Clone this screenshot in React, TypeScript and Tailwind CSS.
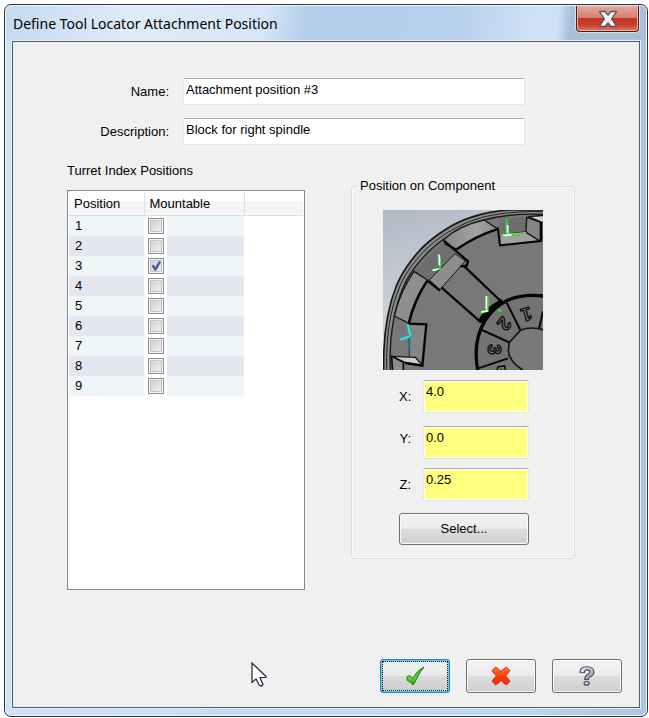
import { useState } from "react";
import type { ReactNode } from "react";

const positions = [1, 2, 3, 4, 5, 6, 7, 8, 9];

const axes = [
  { id: "x", label: "X:", value: "4.0", gap: "mb-[13px]", labelGap: "" },
  { id: "y", label: "Y:", value: "0.0", gap: "mb-[9px]", labelGap: "pb-2" },
  { id: "z", label: "Z:", value: "0.25", gap: "mb-3", labelGap: "" },
];

const fields = [
  { id: "name", label: "Name:", value: "Attachment position #3" },
  { id: "description", label: "Description:", value: "Block for right spindle" },
];

const buttonFace =
  "flex items-center justify-center rounded-[3px] border border-[#707070] bg-[linear-gradient(#f2f2f2_0%,#ebebeb_49%,#dddddd_50%,#cfcfcf_100%)] shadow-[inset_0_0_0_1px_#fbfbfb]";

function CloseIcon() {
  return (
    <svg width="20" height="18" viewBox="0 0 20 18" aria-hidden="true">
      <path
        d="M1.5 1.5H7L10 5.2L13 1.5H18.5L13.6 9L18.5 16.5H13L10 12.8L7 16.5H1.5L6.4 9Z"
        fill="#f3f3f3"
        stroke="#535666"
        strokeWidth="1.3"
        strokeLinejoin="round"
      />
    </svg>
  );
}

function AcceptIcon() {
  return (
    <svg width="19" height="20" viewBox="0 0 19 20" aria-hidden="true">
      <defs>
        <linearGradient id="accept" x1="0" y1="0" x2="0" y2="1">
          <stop offset="0" stopColor="#2fae1c" />
          <stop offset="0.6" stopColor="#6ad83c" />
          <stop offset="1" stopColor="#1f9410" />
        </linearGradient>
      </defs>
      <path
        d="M1 11L3.500 9.500L7 12.500C9.500 7.500 13 3.500 18 1C14 6 11 11.500 8.500 17L7 19C5.500 17 3 15 1.200 14.500Z"
        fill="url(#accept)"
        stroke="#187a12"
        strokeWidth="1"
        strokeLinejoin="round"
      />
    </svg>
  );
}

function CancelIcon() {
  return (
    <svg width="20" height="20" viewBox="0 0 20 20" aria-hidden="true">
      <defs>
        <linearGradient id="cancel" x1="0" y1="0" x2="0" y2="1">
          <stop offset="0" stopColor="#ff7a3d" />
          <stop offset="0.5" stopColor="#ff3b0c" />
          <stop offset="1" stopColor="#f02c05" />
        </linearGradient>
      </defs>
      <path
        d="M4.500 1.200Q7.500 2.500 10 5.500Q12.500 2.500 15.500 1.200L18.800 4.500Q17.500 7.500 14.500 10Q17.500 12.500 18.800 15.500L15.500 18.800Q12.500 17.500 10 14.500Q7.500 17.500 4.500 18.800L1.200 15.500Q2.500 12.500 5.500 10Q2.500 7.500 1.200 4.500Z"
        fill="url(#cancel)"
        stroke="#c6280a"
        strokeWidth="1"
        strokeLinejoin="round"
      />
    </svg>
  );
}

function HelpIcon() {
  return (
    <svg width="16" height="20" viewBox="0 0 16 20" aria-hidden="true">
      <defs>
        <linearGradient id="help" x1="0" y1="0" x2="1" y2="1">
          <stop offset="0" stopColor="#f2f2fb" />
          <stop offset="1" stopColor="#8b8da8" />
        </linearGradient>
      </defs>
      <path
        d="M1 6.500C1 2.500 4 0.700 8 0.700C12 0.700 15 2.700 15 6C15 9 13 10 11 11C9.800 11.700 9.500 12.500 9.500 13.500H5.700C5.700 11 6.500 9.700 8.500 8.500C10 7.600 10.700 7 10.700 5.900C10.700 4.700 9.700 3.900 8.100 3.900C6.300 3.900 5.500 4.900 5.300 6.800Z"
        fill="url(#help)"
        stroke="#44465a"
        strokeWidth="1.100"
        strokeLinejoin="round"
      />
      <ellipse cx="7.600" cy="17.200" rx="2.600" ry="2" fill="#c3c4d6" stroke="#44465a" strokeWidth="1.100" />
    </svg>
  );
}

function Pointer() {
  return (
    <svg
      className="pointer-events-none absolute top-[3px] left-[238px]"
      width="17"
      height="26"
      viewBox="0 0 17 26"
      aria-hidden="true"
    >
      <path
        d="M1 1V20.500L5 17L8.500 23.500L10.500 24L12 22.500L9 15.500H14.800L15 14.500Z"
        fill="#fff"
        stroke="#23233a"
        strokeWidth="1.200"
      />
    </svg>
  );
}

// Corner of the turret disc with its pockets, slot and numbered hub.
function TurretPreview() {
  return (
    <svg
      className="mx-auto block"
      width="160"
      height="160"
      viewBox="129 120 480 480"
      role="img"
      aria-label="Turret component"
    >
      <defs>
        <linearGradient id="sky" x1="0" y1="0" x2="0.3" y2="1">
          <stop offset="0" stopColor="#b1b9c6" />
          <stop offset="0.6" stopColor="#ccd0d6" />
        </linearGradient>
        <linearGradient id="ledge" x1="0" y1="0" x2="1" y2="0">
          <stop offset="0" stopColor="#858585" />
          <stop offset="0.6" stopColor="#a2a2a2" />
          <stop offset="1" stopColor="#8c8c8c" />
        </linearGradient>
      </defs>
      <rect x="129" y="120" width="480" height="480" fill="url(#sky)" />
      <path
        d="M131 640V600C129 500 140 420 170 345C190 300 220 260 250 230C280 200 305 185 330 170C360 153 390 142 420 134C450 126 480 122 509 120H640V640Z"
        fill="#8a8a8a"
        stroke="#151515"
        strokeWidth="5"
      />
      <path
        d="M140 600C138 500 149 422 180 348C200 303 228 268 256 240C285 211 310 195 336 180C365 163 395 151 424 143C470 130 540 123 609 125"
        fill="none"
        stroke="#222"
        strokeWidth="3"
      />
      <path
        d="M151 640V600C147 500 159 425 190 351C208 308 236 275 264 247C290 221 315 203 341 189C370 172 398 160 428 151C480 137 540 130 609 133H640V640Z"
        fill="#787878"
        stroke="#181818"
        strokeWidth="4"
      />

      <path d="M222 304L312 212L350 242L268 330Z" fill="#6e6e6e" />
      <path d="M310 209Q360 165 432 150L472 176Q405 197 350 237L318 224Z" fill="url(#ledge)" stroke="#181818" strokeWidth="4" />
      <path d="M350 238Q405 200 474 177" fill="none" stroke="#050505" strokeWidth="7" />
      <path d="M222 304L262 330Q220 390 205 459L163 438Q180 365 222 304Z" fill="#8e8e8e" stroke="#181818" strokeWidth="4" />
      <path d="M262 332Q224 390 207 458" fill="none" stroke="#050505" strokeWidth="7" />
      <path d="M268 330L345 251L376 273L300 359Z" fill="#8d8d8d" stroke="#181818" strokeWidth="3" />
      <path d="M312 213L346 241L384 274L380 287L362 289M300 362L264 333" fill="none" stroke="#050505" strokeWidth="7" />
      <path d="M373 289L485 396M304 352L424 458" fill="none" stroke="#050505" strokeWidth="7" />

      <path d="M474 178L480 152Q520 142 560 142L560 188L484 196Z" fill="#6e6e6e" />
      <path d="M484 196L558 187L597 211L481 225Z" fill="#a1a1a1" />
      <path d="M560 142L605 158V210L596 211L558 187Z" fill="#858585" stroke="#111" strokeWidth="4" />
      <path d="M565 140L640 134V160L609 158Z" fill="#d4d4d4" stroke="#111" strokeWidth="4" />
      <path d="M473 172L480 226L602 213V156M558 187L484 196" fill="none" stroke="#050505" strokeWidth="6" />
      <path d="M484 195L558 188" stroke="#c7d9c7" strokeWidth="4" />

      <path d="M207 461L259 462L248 587L210 566Z" fill="#858585" />
      <path d="M155 559L226 562L247 586L195 577Z" fill="#cecece" stroke="#111" strokeWidth="4" />
      <path d="M155 559L190 577V640H160Z" fill="#8d8d8d" stroke="#111" strokeWidth="5" />
      <path d="M207 461L208 560" stroke="#222" strokeWidth="3" />
      <path d="M205 461L259 463L247 587L196 579" fill="none" stroke="#050505" strokeWidth="7" />

      <path
        d="M418 640L413 600C402 540 412 490 435 452C455 420 475 404 500 392C535 376 570 373 609 378H640V640Z"
        fill="#737373"
        stroke="#050505"
        strokeWidth="10"
      />
      <path d="M420 456Q442 416 488 394" fill="none" stroke="#050505" strokeWidth="16" />
      <path d="M426 480L508 517M500 398L541 480M412 596L504 565M609 424L597 477" stroke="#050505" strokeWidth="6" />
      <path
        d="M580 640L548 600Q506 574 505 540L508 517L541 481Q572 468 609 479H640V640Z"
        fill="#797979"
        stroke="#151515"
        strokeWidth="5"
      />
      <g
        fill="#777"
        stroke="#101010"
        strokeWidth="4"
        strokeLinejoin="round"
        fontFamily="Liberation Sans, sans-serif"
        fontWeight="700"
        fontSize="56"
        textAnchor="middle"
      >
        <text transform="translate(554 414) rotate(165)">1</text>
        <text transform="translate(478 449) rotate(130)">2</text>
        <text transform="translate(443 538) rotate(90)">3</text>
      </g>
      <path d="M470 604L474 590L494 588L497 604M482 604L484 597" fill="none" stroke="#101010" strokeWidth="5" />

      <g fill="none" strokeWidth="5">
        <path d="M500 148V193M484 200L500 193L544 194" stroke="#2de02d" strokeWidth="6" />
        <path d="M503 165V190M490 197L515 194" stroke="#efffef" />
        <path d="M295 252V262M300 265V296L276 301" stroke="#2de02d" strokeWidth="6" />
        <path d="M298 254V286M278 301L296 297" stroke="#efffef" />
        <path d="M442 378V422L421 428M474 421H484" stroke="#2de02d" strokeWidth="8" />
        <path d="M439 378V418M424 426L444 422" stroke="#f2fff2" />
        <path d="M204 463L210 499L181 509" stroke="#2ce4e8" strokeWidth="7" />
        <path d="M211 499V540" stroke="#269a9d" />
      </g>
    </svg>
  );
}

function DialogButton({ label, primary, children }: { label: string; primary?: boolean; children: ReactNode }) {
  return (
    <button
      type="button"
      aria-label={label}
      className={
        primary
          ? "flex h-[34px] w-[70px] rounded-[3px] border border-[#3c7fb1] bg-[#48d3f5] p-px"
          : `${buttonFace} h-[34px] w-[70px]`
      }
    >
      {primary ? (
        <span className="flex h-full w-full items-center justify-center border border-dotted border-black bg-[linear-gradient(#f0f0f0_0%,#e9e9e9_49%,#dadada_50%,#cecece_100%)]">
          {children}
        </span>
      ) : (
        children
      )}
    </button>
  );
}

function PositionTable() {
  const [mounted, setMounted] = useState<number[]>([3]);

  const toggle = (n: number) =>
    setMounted((list) => (list.includes(n) ? list.filter((m) => m !== n) : [...list, n]));

  return (
    <div className="h-[400px] border border-[#828790] bg-white p-px">
      <table className="w-full table-fixed border-collapse text-left">
        <colgroup>
          <col className="w-[75px]" />
          <col className="w-[100px]" />
          <col />
        </colgroup>
        <thead>
          <tr className="h-[23px] border-b border-[#d9dade] bg-[linear-gradient(#ffffff_40%,#f5f6f7_41%,#f3f4f6_100%)]">
            <th className="border-r border-[#dedfe1] pt-[2px] pl-[5px] font-normal">Position</th>
            <th className="border-r border-[#dedfe1] pt-[2px] pl-[5px] font-normal">Mountable</th>
            <td />
          </tr>
        </thead>
        <tbody>
          {positions.map((n) => (
            <tr key={n} className="group h-5">
              <td className="pl-[6px] group-odd:bg-[#eef6f8] group-even:bg-[#e4e7f0]">{n}</td>
              <td className="p-0">
                <div className="flex h-5 items-center">
                  <label className="grid w-[23px] pl-1">
                    <input
                      type="checkbox"
                      aria-label={`Position ${n} mountable`}
                      checked={mounted.includes(n)}
                      onChange={() => toggle(n)}
                      className="peer col-start-1 row-start-1 size-4 appearance-none border border-[#8e8f8f] bg-[linear-gradient(135deg,#c9cdd3,#f4f4f4)] shadow-[inset_0_0_0_1px_#f4f4f4,inset_0_0_0_2px_#c3c7cc]"
                    />
                    <svg
                      className="pointer-events-none invisible col-start-1 row-start-1 size-4 peer-checked:visible"
                      viewBox="0 0 16 16"
                      aria-hidden="true"
                    >
                      <path d="M4 8L5.500 7L7.500 9.500L11 3.500L12.500 4L8 12.500H7Z" fill="#42589e" stroke="#42589e" strokeWidth="0.700" />
                    </svg>
                  </label>
                  <span className="h-full flex-1 group-odd:bg-[#eef6f8] group-even:bg-[#e4e7f0]" />
                </div>
              </td>
              <td />
            </tr>
          ))}
        </tbody>
      </table>
    </div>
  );
}

export default function App() {
  return (
    <div className="bg-white pt-1 pr-px pb-px pl-1 font-['Liberation_Sans',Arial,sans-serif] text-[13px] leading-4 text-black">
      <main className="rounded-[7px] border border-[#29323d] bg-[linear-gradient(90deg,#cfe3f7_0%,#c2dbf3_45%,#bcd7f0_80%,#abc4df_100%)] px-[7px] pb-2 shadow-[inset_0_0_0_1px_#f3f8fd]">
        <header className="-mx-[6px] mt-px flex h-[35px] items-start justify-between rounded-t-[6px] bg-[linear-gradient(95deg,#c5daf0_0%,#dfebf8_20%,#d6e6f6_40%,#b4cfe9_47%,#b5d0ea_70%,#cfe1f4_82%,#cfe1f4_86%,#a8bfd8_88%,#abc0d8_100%)] pr-[7px] pl-[7px]">
          <h1 className="font-['Noto_Sans','Segoe_UI',sans-serif] text-[14px] leading-[35px] font-normal">
            Define Tool Locator Attachment Position
          </h1>
          <button
            type="button"
            aria-label="Close"
            className="flex h-[26px] w-[63px] items-center justify-center rounded-b-[4px] border border-t-0 border-[#4a1c1c] bg-[linear-gradient(#e5a79c_0%,#d67d70_48%,#c0351f_50%,#c8402b_75%,#dc7c68_100%)] shadow-[inset_0_0_0_1px_#e9b3a8,0_0_0_1px_#d5e0ec]"
          >
            <CloseIcon />
          </button>
        </header>

        <form
          className="relative border border-[#4f5c6c] bg-[#f0f0f0] pt-9 pb-[14px] shadow-[0_0_0_1px_#e3eefa]"
          onSubmit={(e) => e.preventDefault()}
        >
          <div className="flex flex-col gap-[13px] pr-[114px]">
            {fields.map((f) => (
              <div key={f.id} className="flex items-center gap-[14px]">
                <label htmlFor={f.id} className="w-[156px] text-right">
                  {f.label}
                </label>
                <input
                  id={f.id}
                  type="text"
                  defaultValue={f.value}
                  className="h-[27px] min-w-0 flex-1 rounded-[2px] border border-[#e2e3ea] border-t-[#abadb3] bg-white px-[2px] pb-1 outline-none"
                />
              </div>
            ))}
          </div>

          <div className="mt-4 flex items-start justify-between pr-16 pl-[54px]">
            <section className="w-[238px]">
              <h2 className="mt-[2px] mb-[11px] h-4">Turret Index Positions</h2>
              <PositionTable />
            </section>

            <fieldset className="mt-[17px] w-56 rounded-[3px] border border-[#d0dfe8] px-[7px] pb-[13px] shadow-[inset_0_0_0_1px_#fafafa]">
              <legend className="px-px">Position on Component</legend>
              <div className="pt-4">
                <TurretPreview />
              </div>
              <div className="pt-[10px] pl-10">
                {axes.map((a) => (
                  <div key={a.id} className={`flex items-center gap-3 ${a.gap}`}>
                    <label htmlFor={a.id} className={`w-3 text-right whitespace-nowrap ${a.labelGap}`}>
                      {a.label}
                    </label>
                    <input
                      id={a.id}
                      type="text"
                      defaultValue={a.value}
                      className="h-[33px] w-[106px] rounded-[2px] border border-[#e2e3ea] border-t-[#abadb3] bg-[#ffff80] px-[2px] pb-[10px] shadow-[inset_0_0_0_1px_#fff] outline-none"
                    />
                  </div>
                ))}
                <button type="button" className={`${buttonFace} h-8 w-[130px]`}>
                  Select...
                </button>
              </div>
            </fieldset>
          </div>

          <footer className="relative mt-[69px] flex justify-end gap-4 pr-[17px]">
            <Pointer />
            <DialogButton label="OK" primary>
              <AcceptIcon />
            </DialogButton>
            <DialogButton label="Cancel">
              <CancelIcon />
            </DialogButton>
            <DialogButton label="Help">
              <HelpIcon />
            </DialogButton>
          </footer>
        </form>
      </main>
    </div>
  );
}
